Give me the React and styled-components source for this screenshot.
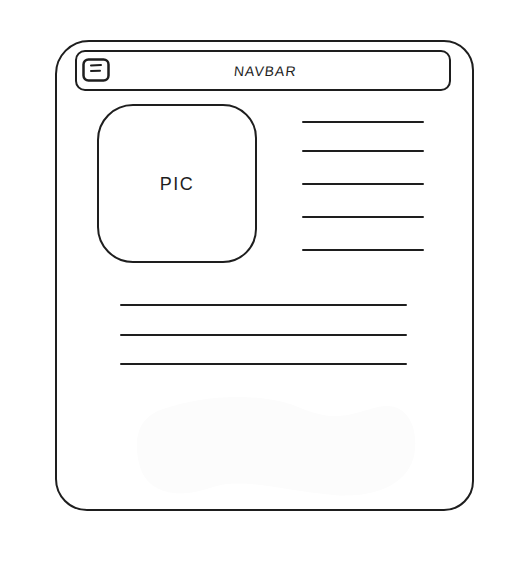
import React from "react";
import styled, { createGlobalStyle } from "styled-components";

const Global = createGlobalStyle`
  html, body {
    margin: 0;
    padding: 0;
    background: #ffffff;
  }
  body {
    font-family: "Liberation Sans", Arial, sans-serif;
    color: #1e1e1e;
  }
`;

const Page = styled.div`
  width: 530px;
  height: 567px;
  padding: 40px 0 0 55px;
  box-sizing: border-box;
`;

const Frame = styled.div`
  width: 419px;
  height: 471px;
  box-sizing: border-box;
  border: 2.5px solid #1e1e1e;
  border-radius: 34px 30px 30px 32px;
  padding: 8px 0 0 18px;
  display: flex;
  flex-direction: column;
`;

const Navbar = styled.div`
  width: 376px;
  height: 41px;
  box-sizing: border-box;
  border: 2.5px solid #1e1e1e;
  border-radius: 10px;
  display: grid;
  grid-template-columns: 1fr auto 1fr;
  align-items: center;
  padding: 0 0 0 5px;
`;

const NavTitle = styled.span`
  font-size: 14px;
  letter-spacing: 1px;
  transform: skewX(-6deg);
  color: #1e1e1e;
`;

const MenuIcon = () => (
  <svg width="28" height="25" viewBox="0 0 28 25" fill="none">
    <rect
      x="1.5"
      y="1.5"
      width="25"
      height="21"
      rx="5"
      stroke="#1e1e1e"
      strokeWidth="2.5"
    />
    <path
      d="M9 7.5 L19 7 M9 13 L18 12.8"
      stroke="#1e1e1e"
      strokeWidth="2"
      strokeLinecap="round"
    />
  </svg>
);

const TopRow = styled.div`
  display: flex;
  margin-top: 13px;
  padding-left: 22px;
`;

const Pic = styled.div`
  width: 160px;
  height: 159px;
  box-sizing: border-box;
  border: 2px solid #1e1e1e;
  border-radius: 36px 34px 34px 36px;
  display: flex;
  align-items: center;
  justify-content: center;
  font-size: 18px;
  letter-spacing: 1.5px;
  padding-top: 1px;
  color: #1e1e1e;
`;

const LineStack = styled.div`
  display: flex;
  flex-direction: column;
  margin-left: 45px;
`;

const Line = styled.div`
  width: ${(p) => p.$w}px;
  height: 2px;
  background: #1e1e1e;
  border-radius: 1px;
  margin-top: ${(p) => p.$top}px;
`;

const BottomLines = styled.div`
  display: flex;
  flex-direction: column;
  padding-left: 45px;
`;

const Blob = styled.svg`
  margin: 22px 0 0 58px;
  display: block;
`;

const rightLines = [17, 27, 31, 31, 31];
const bottomLines = [41, 28, 27];

export default function App() {
  return (
    <>
      <Global />
      <Page>
        <Frame>
          <Navbar>
            <MenuIcon />
            <NavTitle>NAVBAR</NavTitle>
            <span />
          </Navbar>
          <TopRow>
            <Pic>PIC</Pic>
            <LineStack>
              {rightLines.map((t, i) => (
                <Line key={i} $w={122} $top={t} />
              ))}
            </LineStack>
          </TopRow>
          <BottomLines>
            {bottomLines.map((t, i) => (
              <Line key={i} $w={287} $top={t} />
            ))}
          </BottomLines>
          <Blob width="284" height="116" viewBox="0 0 284 116">
            <path
              d="M30 22 C70 8 130 4 170 22 C205 36 220 26 245 20 C275 14 284 40 282 62 C280 92 250 112 200 108 C150 104 110 90 80 100 C40 114 12 104 6 76 C0 50 6 30 30 22 Z"
              fill="#fcfcfc"
            />
          </Blob>
        </Frame>
      </Page>
    </>
  );
}
